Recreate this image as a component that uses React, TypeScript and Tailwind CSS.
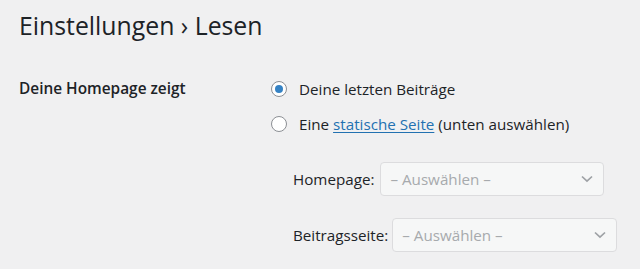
import React from "react";

const Chevron = () => (
  <svg width="12" height="8" viewBox="0 0 12 8" fill="none">
    <path d="M1 1.5 L6 6.2 L11 1.5" stroke="#9ea1a5" strokeWidth="1.7" />
  </svg>
);

function Select({ width }: { width: string }) {
  return (
    <div
      className={`${width} h-[34px] flex items-center justify-between pl-[9px] pr-[10px] rounded-[4px] border border-[#dcdcde] bg-[#f6f7f7] text-[#a7aaad] text-[15.2px]`}
    >
      <span>– Auswählen –</span>
      <Chevron />
    </div>
  );
}

export default function App() {
  return (
    <div
      className="w-[640px] h-[269px] bg-[#f0f0f1] text-[#1d2327] overflow-hidden"
      style={{ fontFamily: '"Open Sans", "Noto Sans", sans-serif' }}
    >
      <h1 className="pl-[19px] pt-[7px] text-[24.8px] leading-[36px] font-normal">
        Einstellungen › Lesen
      </h1>
      <div className="flex mt-[34px]">
        <div className="w-[271px] shrink-0 pl-[19px] text-[15.4px] font-semibold leading-[24px]">
          Deine Homepage zeigt
        </div>
        <div className="flex flex-col">
          <label className="flex items-center h-[24px] text-[15.2px]">
            <span className="w-[16px] h-[16px] rounded-full border border-[#8c8f94] bg-white flex items-center justify-center mr-[12px]">
              <span className="w-[8px] h-[8px] rounded-full bg-[#3582c4]" />
            </span>
            Deine letzten Beiträge
          </label>
          <label className="flex items-center h-[24px] mt-[11px] text-[15.2px]">
            <span className="w-[16px] h-[16px] rounded-full border border-[#8c8f94] bg-white mr-[12px]" />
            Eine&nbsp;
            <span className="text-[#2271b1] underline underline-offset-2">statische Seite</span>
            &nbsp;(unten auswählen)
          </label>
          <div className="flex flex-col pl-[22px] mt-[26px] gap-[22px] text-[15.2px]">
            <div className="flex items-center gap-[6px]">
              <span>Homepage:</span>
              <Select width="w-[224px]" />
            </div>
            <div className="flex items-center gap-[4px]">
              <span>Beitragsseite:</span>
              <Select width="w-[225px]" />
            </div>
          </div>
        </div>
      </div>
    </div>
  );
}
